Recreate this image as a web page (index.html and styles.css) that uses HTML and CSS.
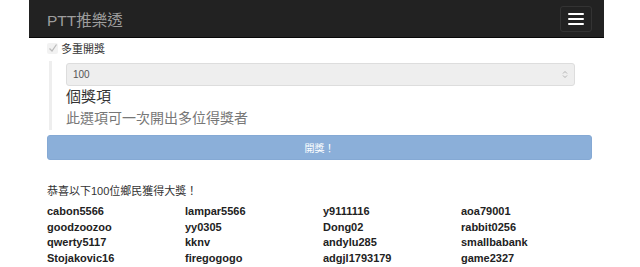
FILE: index.html
```html
<!DOCTYPE html>
<html lang="zh-Hant">
<head>
    <meta charset="UTF-8">
    <meta name="viewport" content="width=device-width, initial-scale=1.0">
    <title>PTT推樂透</title>
    <link rel="stylesheet" href="styles.css">
</head>
<body>
    <div class="wrap">
        <nav class="navbar">
            <span class="brand">PTT推樂透</span>
            <button class="toggle" type="button">
                <span class="bar"></span>
                <span class="bar"></span>
                <span class="bar"></span>
            </button>
        </nav>

        <div class="content">
            <label class="multi">
                <span class="check">
                    <svg width="10" height="10" viewBox="0 0 10 10"><path d="M1.5 5.5 L4 8 L8.5 1.5" fill="none" stroke="#bbb" stroke-width="1.3"/></svg>
                </span>
                多重開獎
            </label>

            <div class="group">
                <div class="select">
                    <span>100</span>
                    <svg width="6" height="9" viewBox="0 0 6 9"><path d="M1 3.5 L3 1.5 L5 3.5 M1 5.5 L3 7.5 L5 5.5" fill="none" stroke="#aaa" stroke-width="0.9"/></svg>
                </div>
                <p class="unit">個獎項</p>
                <p class="help">此選項可一次開出多位得獎者</p>
            </div>

            <button class="draw" type="button" disabled>開獎！</button>

            <p class="congrats">恭喜以下100位鄉民獲得大獎！</p>
            <div class="winners">
                <span>cabon5566</span><span>lampar5566</span><span>y9111116</span><span>aoa79001</span>
                <span>goodzoozoo</span><span>yy0305</span><span>Dong02</span><span>rabbit0256</span>
                <span>qwerty5117</span><span>kknv</span><span>andylu285</span><span>smallbabank</span>
                <span>Stojakovic16</span><span>firegogogo</span><span>adgjl1793179</span><span>game2327</span>
            </div>
        </div>
    </div>
</body>
</html>
```

FILE: styles.css
```css
body {
    margin: 0;
    font-family: "Liberation Sans", "Noto Sans CJK TC", sans-serif;
    color: #333;
    background: #fff;
}

.wrap {
    width: 575px;
    margin-left: 29px;
}

.navbar {
    height: 38px;
    background: #222;
    border-bottom: 1px solid #080808;
    box-sizing: border-box;
    display: flex;
    align-items: center;
    justify-content: space-between;
    padding: 0 12px 0 18px;
}

.brand {
    color: #9d9d9d;
    font-size: 15.5px;
}

.toggle {
    width: 32px;
    height: 26px;
    background: transparent;
    border: 1px solid #333;
    border-radius: 3px;
    display: flex;
    flex-direction: column;
    justify-content: center;
    align-items: center;
    gap: 3px;
    padding: 0;
}

.toggle .bar {
    display: block;
    width: 16px;
    height: 2px;
    background: #fff;
    border-radius: 1px;
}

.content {
    width: 545px;
    padding-left: 18px;
}

.multi {
    display: flex;
    align-items: center;
    gap: 3px;
    height: 18px;
    padding-top: 1px;
    font-size: 11px;
    color: #333;
}

.check {
    width: 11px;
    height: 11px;
    border-radius: 2px;
    background: #f2f2f2;
    display: flex;
    align-items: center;
    justify-content: center;
}

.group {
    margin: 4px 0 0 2px;
    border-left: 3px solid #eee;
    padding: 2px 0 2px 14px;
}

.select {
    width: 509px;
    height: 23px;
    box-sizing: border-box;
    background: #eee;
    border: 1px solid #ddd;
    border-radius: 3px;
    display: flex;
    align-items: center;
    justify-content: space-between;
    padding: 0 6px;
    font-size: 10px;
    color: #555;
}

.unit {
    margin: 1px 0 0;
    font-size: 15px;
    line-height: 20px;
    color: #333;
}

.help {
    margin: 1px 0 0;
    font-size: 14px;
    line-height: 20px;
    color: #777;
}

.draw {
    display: block;
    width: 545px;
    height: 25px;
    margin-top: 5px;
    background: #8bafd9;
    border: 1px solid #85a9d4;
    border-radius: 3px;
    color: #fff;
    font-family: inherit;
    font-size: 10px;
}

.congrats {
    margin: 23px 0 0;
    font-size: 11px;
    line-height: 16px;
    color: #333;
}

.winners {
    display: grid;
    grid-template-columns: repeat(4, 138px);
    margin-top: 5px;
    font-size: 11px;
    font-weight: bold;
    line-height: 15.6px;
    color: #222;
}
```
